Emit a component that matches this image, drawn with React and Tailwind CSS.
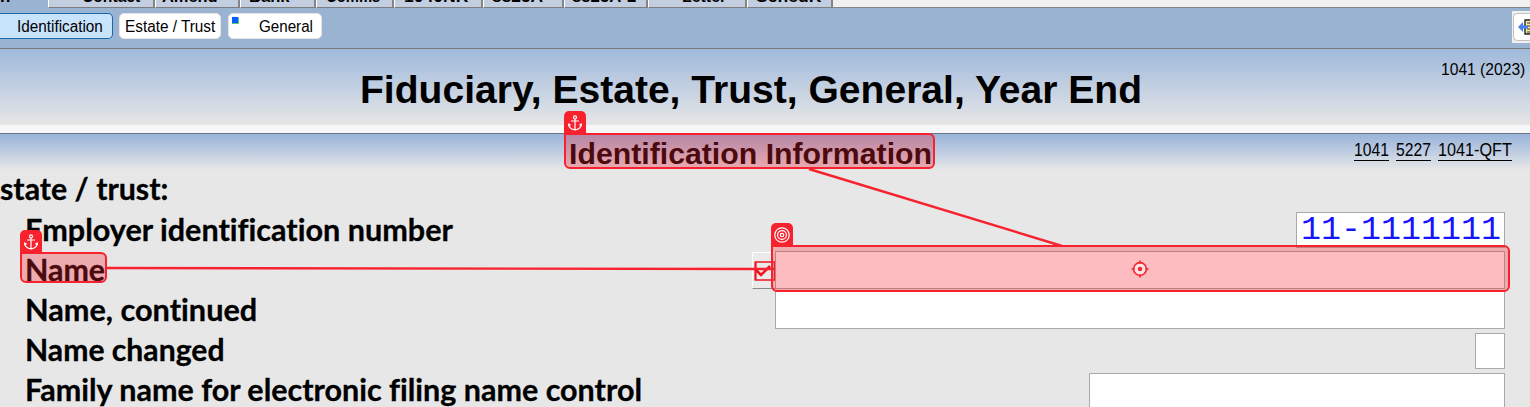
import { useLayoutEffect, useRef } from "react";

function Fit({ w, className = "", children }) {
  const box = useRef(null);
  useLayoutEffect(() => {
    const el = box.current;
    el.style.transform = `scaleX(${w / el.offsetWidth})`;
  }, [w]);
  return (
    <span className="inline-block shrink-0 text-left" style={{ width: w }}>
      <span ref={box} className={`inline-block origin-left whitespace-nowrap ${className}`}>{children}</span>
    </span>
  );
}

const tabs = [
  ["w-[107px] pl-[33px]", "Contact", 58],
  ["w-[85px] pl-[6px]", "Amend", 56],
  ["w-[76px] pl-[8px]", "Bank", 41],
  ["w-[78px] pl-[9px]", "Comms", 54],
  ["w-[89px] pl-[9px]", "1040NR", 64],
  ["w-[81px] pl-[8px]", "8825A", 51],
  ["w-[84px] pl-[7px]", "8825A-2", 64],
  ["w-[99px] pl-[33px]", "Letter", 44],
  ["w-[86px] pl-[8px]", "SchedK", 65],
];

function Anchor() {
  return (
    <svg className="h-[16px] w-[14px]" viewBox="0 0 14 16" fill="none" stroke="white" strokeWidth="1.2">
      <circle cx="7" cy="2.4" r="1.5" />
      <path d="M7 4v10.8M3 6h8M.7 9.3C1 12.6 3.4 14.5 7 14.8c3.6-.3 6-2.2 6.3-5.5M.2 11l.7-2 1.7 1.3M13.8 11l-.7-2-1.7 1.3" />
    </svg>
  );
}

function Badge({ className, children }) {
  return <div className={`absolute flex h-[23px] w-[22px] items-center justify-center rounded-t-[5px] bg-[#f8222f] ${className}`}>{children}</div>;
}

function Row({ label, w, children }) {
  return (
    <div className="flex h-10 items-center justify-between pr-[25px] pl-[25px]">
      <div className="pb-[2px] [-webkit-text-stroke:0.3px_black]"><Fit w={w}>{label}</Fit></div>
      {children}
    </div>
  );
}

export default function App() {
  return (
    <div className="relative h-[407px] w-[1530px] overflow-hidden bg-[#e7e7e7] font-['Liberation_Sans',sans-serif] text-black">
      <div className="flex h-2 bg-[#f0f0f0]">
        <div className="w-[48px] overflow-hidden bg-[#9ab3d1] text-[17px] leading-[17px] font-bold"><div className="-mt-[12px]">n</div></div>
        {tabs.map(([size, name, w]) => (
          <div key={name} className={`h-2 shrink-0 overflow-hidden border-r-2 border-b border-l border-r-[#858585] border-b-[#7d7d7d] border-l-white bg-[#c3cfe0] text-[17px] leading-[17px] font-bold ${size}`}>
            <div className="-mt-[12px]"><Fit w={w}>{name}</Fit></div>
          </div>
        ))}
        <div className="h-2 flex-1 border-b border-[#858585]" />
      </div>
      <div className="flex h-[41px] items-start justify-between border-b border-[#77777c] bg-[#9ab3d1] pt-[5px] text-[16px]">
        <div className="flex">
          <div className="flex h-[26px] w-[113px] items-center rounded-r-[5px] border border-l-0 border-[#1767ac] bg-[#c8e3fc] pt-px pl-[17px]"><Fit w={86}>Identification</Fit></div>
          <div className="ml-[6px] flex h-[26px] w-[102px] items-center rounded-[5px] border border-[#e5e5e5] bg-white pt-px pl-[5px]"><Fit w={90}>Estate / Trust</Fit></div>
          <div className="relative ml-[7px] flex h-[26px] w-[94px] items-center rounded-[5px] border border-[#e5e5e5] bg-white pt-px pl-[30px]">
            <div className="absolute top-[3px] left-[3px] size-[7px] border-r border-b border-[#62c66b] bg-[#0360ff]" />
            <Fit w={54}>General</Fit>
          </div>
        </div>
        <div className="-mt-[2px] flex h-[32px] w-[18px] items-center overflow-hidden border-t-2 border-b-2 border-l border-[#f0f0f0] bg-[#e8e8e8]">
          <div className="h-[28px] w-[17px] shrink-0 rounded-l-[5px] border border-r-0 border-[#c2c2c2] bg-white">
            <svg className="h-[26px] w-[16px]" viewBox="0 0 16 26">
              <path d="M11 6h6v14h-6z" fill="#eeee9d" stroke="#222" strokeWidth="1.4" />
              <path d="M13 9h3M13 12h3M13 15h3M13 18h3" stroke="#333" />
              <path d="M4 13l5-5v3.5h5v3H9V18z" fill="#477dec" />
            </svg>
          </div>
        </div>
      </div>
      <div className="relative h-[84px] bg-linear-to-b from-[#a0b9db] to-[#e7e7e7] to-92% pt-[21px] pl-[360px]">
        <Fit w={782} className="text-[39px] leading-[39px] font-bold">Fiduciary, Estate, Trust, General, Year End</Fit>
        <div className="absolute top-[11px] right-[5px] text-[16px] leading-[20px]"><Fit w={84}>1041 (2023)</Fit></div>
        <div className="absolute inset-x-0 bottom-0 h-[8px] bg-[#f7f7f7]" />
      </div>
      <div className="relative flex h-[37px] items-start justify-between border-t border-[#6e7480] bg-linear-to-b from-[#98b3da] to-[#e7e7e7] pr-[18px] pl-[569px]">
        <Fit w={363} className="mt-[4px] text-[29.5px] leading-[31px] font-bold">Identification Information</Fit>
        <div className="mt-[6px] flex gap-[7px] text-[17.5px] leading-[20px]">
          <div className="border-b border-black"><Fit w={35}>1041</Fit></div>
          <div className="border-b border-black"><Fit w={35}>5227</Fit></div>
          <div className="border-b border-black"><Fit w={74}>1041-QFT</Fit></div>
        </div>
      </div>
      <div className="font-['Lato',sans-serif] text-[30px] leading-[38px] font-bold [font-variant-ligatures:none]">
        <div className="-mt-px h-[41px] [-webkit-text-stroke:0.3px_black]"><Fit w={168}>state / trust:</Fit></div>
        <Row label="Employer identification number" w={428}>
          <div className="h-[36px] w-[209px] border border-[#a9a9a9] bg-white pl-[4px] font-['Liberation_Mono',monospace] text-[33px] leading-[36px] font-normal text-[#1414ff]"><Fit w={200}>11-1111111</Fit></div>
        </Row>
        <Row label="Name" w={80}>
          <div className="flex">
            <div className="mt-px flex h-[37px] w-[23px] items-center border-t border-b border-l border-t-white border-b-[#898989] border-l-white bg-[#eaeaea] pl-px">
              <svg className="h-5 w-[21px]" viewBox="0 0 21 20" fill="none" stroke="#f01420">
                <path d="M1.5 1h19v18h-19z" strokeWidth="1.5" />
                <path d="M1.5 1v18" strokeWidth="2" />
                <path d="M2 9l5 5 9-9" strokeWidth="2.6" />
              </svg>
            </div>
            <div className="h-[38px] w-[730px] border border-[#a9a9a9] bg-white" />
          </div>
        </Row>
        <Row label="Name, continued" w={232}><div className="h-[38px] w-[730px] border border-[#a9a9a9] bg-white" /></Row>
        <Row label="Name changed" w={200}><div className="mt-px h-[36px] w-[30px] border border-[#a9a9a9] bg-white" /></Row>
        <Row label="Family name for electronic filing name control" w={617}><div className="mt-[4px] h-[38px] w-[416px] border border-[#a9a9a9] bg-white" /></Row>
      </div>
      <svg className="absolute inset-0 h-[407px] w-[1530px]" viewBox="0 0 1530 407" stroke="#f8222f" strokeWidth="2.4">
        <path d="M106 268L775 269M809 169L1062 246" />
      </svg>
      <div className="absolute top-[133px] left-[564px] h-[36px] w-[371px] rounded-[6px] rounded-tl-none border-2 border-[#f8222f] bg-[#f8222f]/30" />
      <Badge className="top-[111px] left-[564px]"><Anchor /></Badge>
      <div className="absolute top-[252px] left-[20px] h-[31px] w-[87px] rounded-[6px] rounded-tl-none border-2 border-[#f8222f] bg-[#f8222f]/30" />
      <Badge className="top-[230px] left-[20px]"><Anchor /></Badge>
      <div className="absolute top-[245px] left-[771px] h-[47px] w-[739px] rounded-[6px] rounded-tl-none border-2 border-[#f8222f] bg-[#f8222f]/30" />
      <Badge className="top-[223px] left-[771px]">
        <svg className="size-[16px]" viewBox="0 0 16 16" fill="none" stroke="white" strokeWidth="1.2">
          <circle cx="8" cy="8" r="7.2" /><circle cx="8" cy="8" r="4.4" /><circle cx="8" cy="8" r="1.7" />
        </svg>
      </Badge>
      <svg className="absolute top-[260px] left-[1131px] size-[18px]" viewBox="0 0 18 18" fill="none" stroke="#f8222f" strokeWidth="1.6">
        <circle cx="9" cy="9" r="6.4" fill="#fde4e6" />
        <circle cx="9" cy="9" r="2.2" fill="#f8222f" stroke="none" />
        <path d="M9 .5v3M9 14.5v3M.5 9h3M14.5 9h3" />
      </svg>
    </div>
  );
}
